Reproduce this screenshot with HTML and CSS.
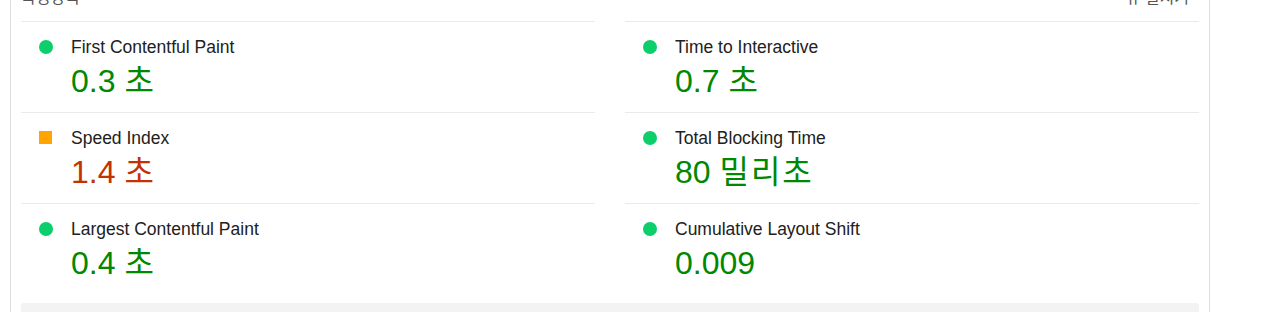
FILE: index.html
```html
<!DOCTYPE html>
<html lang="ko">
<head>
    <meta charset="UTF-8">
    <meta name="viewport" content="width=device-width, initial-scale=1.0">
    <title>Lighthouse 측정항목</title>
    <link rel="stylesheet" href="styles.css">
</head>
<body>
    <section class="report">
        <div class="metrics-header">
            <span class="metrics-title">측정항목</span>
            <span class="metrics-toggle">뷰 펼치기</span>
        </div>

        <div class="metrics">
            <div class="metric pass">
                <span class="metric-icon"></span>
                <div class="metric-title">First Contentful Paint</div>
                <div class="metric-value">0.3 <span class="unit">초</span></div>
            </div>
            <div class="metric pass">
                <span class="metric-icon"></span>
                <div class="metric-title">Time to Interactive</div>
                <div class="metric-value">0.7 <span class="unit">초</span></div>
            </div>
            <div class="metric average">
                <span class="metric-icon"></span>
                <div class="metric-title">Speed Index</div>
                <div class="metric-value">1.4 <span class="unit">초</span></div>
            </div>
            <div class="metric pass">
                <span class="metric-icon"></span>
                <div class="metric-title">Total Blocking Time</div>
                <div class="metric-value">80 <span class="unit">밀리초</span></div>
            </div>
            <div class="metric pass">
                <span class="metric-icon"></span>
                <div class="metric-title">Largest Contentful Paint</div>
                <div class="metric-value">0.4 <span class="unit">초</span></div>
            </div>
            <div class="metric pass">
                <span class="metric-icon"></span>
                <div class="metric-title">Cumulative Layout Shift</div>
                <div class="metric-value">0.009</div>
            </div>
        </div>

        <div class="filmstrip"></div>
    </section>
</body>
</html>
```

FILE: styles.css
```css
body {
    margin: 0;
    padding: 0;
    font-family: "Liberation Sans", Arial, "Noto Sans CJK KR", sans-serif;
    background: #fff;
    color: #212121;
    overflow: hidden;
}

.report {
    width: 1178px;
    margin: -14px 0 0 10px;
    padding: 0 10px;
    border-left: 1px solid #dcdcdc;
    border-right: 1px solid #dcdcdc;
}

.metrics-header {
    display: flex;
    justify-content: space-between;
    padding: 0 10px 11px 0;
    font-size: 16px;
    line-height: 24px;
    color: #555;
}

.metrics {
    display: grid;
    grid-template-columns: 1fr 1fr;
    column-gap: 30px;
}

.metric {
    display: grid;
    grid-template-columns: 14px 1fr;
    column-gap: 18px;
    padding: 13px 0 11px 18px;
    border-top: 1px solid #ebebeb;
}

.metric-icon {
    width: 14px;
    height: 14px;
    margin-top: 5px;
    border-radius: 50%;
}

.pass .metric-icon {
    background: #0cce6b;
}

.average .metric-icon {
    width: 13px;
    height: 13px;
    border-radius: 0;
    background: #ffa400;
}

.metric-title {
    font-size: 17.5px;
    line-height: 24px;
    color: #212121;
}

.metric-value {
    grid-column: 2;
    margin-top: 2px;
    font-size: 32px;
    line-height: 40px;
}

.unit {
    letter-spacing: 2px;
}

.pass .metric-value {
    color: #008800;
}

.average .metric-value {
    color: #c33300;
}

.filmstrip {
    height: 40px;
    margin-top: 9px;
    background: #f3f3f3;
    border-radius: 3px;
}
```
